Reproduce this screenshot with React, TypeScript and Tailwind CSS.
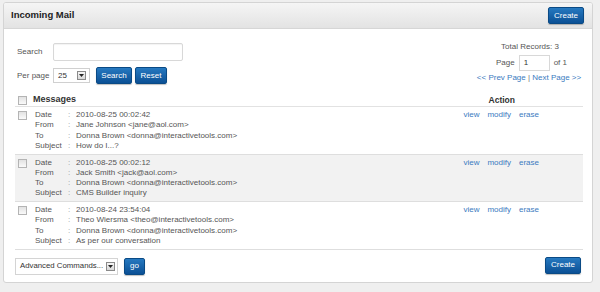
import React from 'react';

const messages = [
  { date: '2010-08-25 00:02:42', from: 'Jane Johnson <jane@aol.com>', to: 'Donna Brown <donna@interactivetools.com>', subject: 'How do I...?' },
  { date: '2010-08-25 00:02:12', from: 'Jack Smith <jack@aol.com>', to: 'Donna Brown <donna@interactivetools.com>', subject: 'CMS Builder inquiry' },
  { date: '2010-08-24 23:54:04', from: 'Theo Wiersma <theo@interactivetools.com>', to: 'Donna Brown <donna@interactivetools.com>', subject: 'As per our conversation' },
];

function Checkbox() {
  return <span className="block w-[9px] h-[9px] border border-[#b4b4b4] bg-gradient-to-b from-[#e2e2e2] to-[#fafafa]" />;
}

function BlueButton({ children, className = '' }: { children: React.ReactNode; className?: string }) {
  return (
    <button className={`h-[17px] rounded-[2px] border border-[#0a4a85] bg-gradient-to-b from-[#2679c0] to-[#0b5095] text-white text-[8px] leading-none whitespace-nowrap shadow-[0_1px_1px_rgba(0,0,0,0.25)] ${className}`}>
      {children}
    </button>
  );
}

function SelectArrow() {
  return (
    <span className="flex items-center justify-center w-[9px] h-[9px] border border-[#8a8a8a] bg-gradient-to-b from-[#f6f6f6] to-[#d8d8d8]">
      <svg width="5" height="3" viewBox="0 0 5 3"><path d="M0 0h5L2.5 3z" fill="#222" /></svg>
    </span>
  );
}

export default function App() {
  return (
    <div className="w-[600px] h-[292px] bg-[#efefef] pt-[2px] pl-[3px] text-[#555] whitespace-nowrap font-['Liberation_Sans',Arial,sans-serif]">
      <div className="w-[590px] h-[281px] bg-white border border-[#d4d4d4] rounded-[3px] flex flex-col overflow-hidden">
        {/* Header */}
        <div className="h-[26px] shrink-0 flex items-center justify-between pl-[7px] pr-[8px] bg-gradient-to-b from-[#f5f5f5] to-[#e3e3e3] border-b border-[#d6d6d6]">
          <h1 className="text-[9.5px] font-bold text-[#222]">Incoming Mail</h1>
          <BlueButton className="w-[36px] h-[16px]">Create</BlueButton>
        </div>

        <div className="flex-1 px-[11px] flex flex-col">
          {/* Search + paging */}
          <div className="flex justify-between pt-[14px] h-[65px]">
            <div className="flex flex-col gap-[6px] text-[8px] text-[#555]">
              <div className="flex items-center">
                <span className="w-[38px] pl-[2px]">Search</span>
                <span className="block w-[130px] h-[18px] border border-[#d8d8d8] rounded-[2px] bg-white shadow-[inset_0_1px_1px_rgba(0,0,0,0.05)]" />
              </div>
              <div className="flex items-center">
                <span className="w-[38px] pl-[2px]">Per page</span>
                <span className="flex items-center justify-between w-[37px] h-[15px] border border-[#d0d0d0] pl-[4px] pr-[3px] text-[8px] text-[#333]">
                  25 <SelectArrow />
                </span>
                <BlueButton className="w-[36px] ml-[6px]">Search</BlueButton>
                <BlueButton className="w-[32px] ml-[3px]">Reset</BlueButton>
              </div>
            </div>
            <div className="flex flex-col items-center w-[102px] text-[8px] text-[#555] mr-[1px] -mt-[1px]">
              <span className="leading-[10px] ml-[2px]">Total Records: 3</span>
              <div className="flex items-center gap-[4px] h-[16px] ml-[5px] mt-[3px]">
                <span>Page</span>
                <span className="block w-[31px] h-[16px] border border-[#d8d8d8] pl-[4px] leading-[14px] text-[#333]">1</span>
                <span>of 1</span>
              </div>
              <span className="leading-[10px] mt-[2px] text-[#3b7ac0]">
                &lt;&lt; Prev Page <span className="text-[#777]">|</span> Next Page &gt;&gt;
              </span>
            </div>
          </div>

          {/* Table */}
          <div className="w-[568px]">
            <div className="flex items-center h-[13px] border-b border-[#e2e2e2] pl-[3px]">
              <Checkbox />
              <span className="ml-[6px] text-[9px] font-bold text-[#333]">Messages</span>
              <span className="ml-auto mr-[68px] text-[8.5px] font-bold text-[#333]">Action</span>
            </div>
            {messages.map((m, i) => (
              <div key={i} className={`flex pl-[3px] pt-[3px] h-[47.5px] border-b border-[#dedede] ${i === 1 ? 'bg-[#f2f2f2]' : 'bg-white'}`}>
                <div className="pt-[1px]"><Checkbox /></div>
                <div className="ml-[8px] text-[8px] leading-[10.3px] text-[#555]">
                  {[['Date', m.date], ['From', m.from], ['To', m.to], ['Subject', m.subject]].map(([k, v]) => (
                    <div key={k} className="flex">
                      <span className="w-[33px] text-[#555]">{k}</span>
                      <span className="w-[8px] text-[#999]">:</span>
                      <span>{v}</span>
                    </div>
                  ))}
                </div>
                <div className="ml-auto mr-[44px] flex gap-[8px] text-[8px] leading-[10.3px] text-[#3b7ac0]">
                  <span>view</span>
                  <span>modify</span>
                  <span>erase</span>
                </div>
              </div>
            ))}
          </div>

          {/* Footer */}
          <div className="flex items-center justify-between w-[566px] mt-[8px]">
            <div className="flex items-center">
              <span className="flex items-center justify-between w-[103px] h-[17px] border border-[#d4d4d4] pl-[4px] pr-[2px] text-[7.8px] text-[#333]">
                Advanced Commands... <SelectArrow />
              </span>
              <BlueButton className="w-[21px] h-[16px] ml-[6px]">go</BlueButton>
            </div>
            <BlueButton className="w-[36px] h-[16px] -mt-[2px]">Create</BlueButton>
          </div>
        </div>
      </div>
    </div>
  );
}
